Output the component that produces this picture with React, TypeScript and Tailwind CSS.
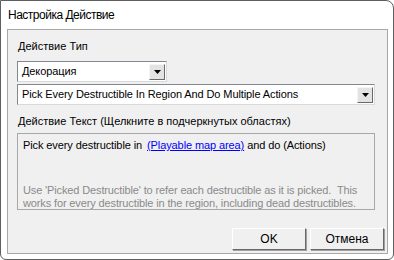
import React from 'react';

const ui = { fontFamily: '"Liberation Sans", Arial, sans-serif' };

function DropButton() {
  return (
    <div className="flex h-[16px] w-[16px] items-center justify-center border border-t-[#f5f5f5] border-l-[#f5f5f5] border-r-[#696969] border-b-[#696969] bg-[#e3e3e3]">
      <svg width="7" height="4" viewBox="0 0 7 4">
        <path d="M0 0h7L3.5 4z" fill="#000" />
      </svg>
    </div>
  );
}

function Combo({ value, width }: { value: string; width: string }) {
  return (
    <div
      className={`${width} flex h-[21px] items-center justify-between border border-t-[#828790] border-l-[#828790] border-r-[#d9d9d9] border-b-[#d9d9d9] bg-white pl-[4px] pr-[1px]`}
    >
      <span className="text-[11px] leading-[13px] tracking-[-0.1px] text-black">{value}</span>
      <DropButton />
    </div>
  );
}

function Button({ label }: { label: string }) {
  return (
    <button className="flex h-[22px] w-[74px] items-center justify-center border border-t-white border-l-white border-r-[#696969] border-b-[#696969] bg-[#f0f0f0] text-[12px] leading-[14px] text-black shadow-[1px_1px_0_#a0a0a0]">
      {label}
    </button>
  );
}

export default function App() {
  return (
    <div className="h-[260px] w-[394px] bg-white" style={ui}>
      <div className="flex h-[260px] w-[394px] flex-col rounded-tr-[8px] rounded-b-[6px] border border-[#5f5f5f] bg-white">
        <div className="flex h-[28px] items-center pl-[7px] text-[12px] tracking-[-0.5px] text-black">
          Настройка Действие
        </div>

        <div className="ml-[6px] mr-[5px] flex h-[225px] flex-col border border-[#a8a8a8] bg-[#f0f0f0] pl-[9px] pr-[3px]">
          <div className="mt-[10px] h-[13px] pl-[1px] text-[11px] leading-[13px] text-black">Действие Тип</div>
          <div className="mt-[8px]">
            <Combo value="Декорация" width="w-[150px]" />
          </div>
          <div className="mt-[2px]">
            <Combo value="Pick Every Destructible In Region And Do Multiple Actions" width="w-[358px]" />
          </div>

          <div className="mt-[10px] h-[13px] pl-[1px] text-[11px] leading-[13px] text-black">
            Действие Текст (Щелкните в подчеркнутых областях)
          </div>

          <div className="mt-[5px] flex h-[77px] w-[358px] flex-col border border-[#a8a8a8] bg-[#f0f0f0] px-[5px] pt-[5px]">
            <div className="text-[11px] leading-[13px] tracking-[-0.1px] text-black">
              Pick every destructible in{' '}
              <span className="ml-[2px] text-[#0000ff] underline">(Playable map area)</span> and do (Actions)
            </div>
            <div className="mt-[32px] text-[11px] leading-[13px] tracking-[-0.13px] text-[#8a8a8a]">
              <div>Use 'Picked Destructible' to refer each destructible as it is picked.&nbsp; This</div>
              <div>works for every destructible in the region, including dead destructibles.</div>
            </div>
          </div>

          <div className="mt-[18px] flex justify-end gap-[4px]">
            <Button label="OK" />
            <Button label="Отмена" />
          </div>
        </div>
      </div>
    </div>
  );
}
